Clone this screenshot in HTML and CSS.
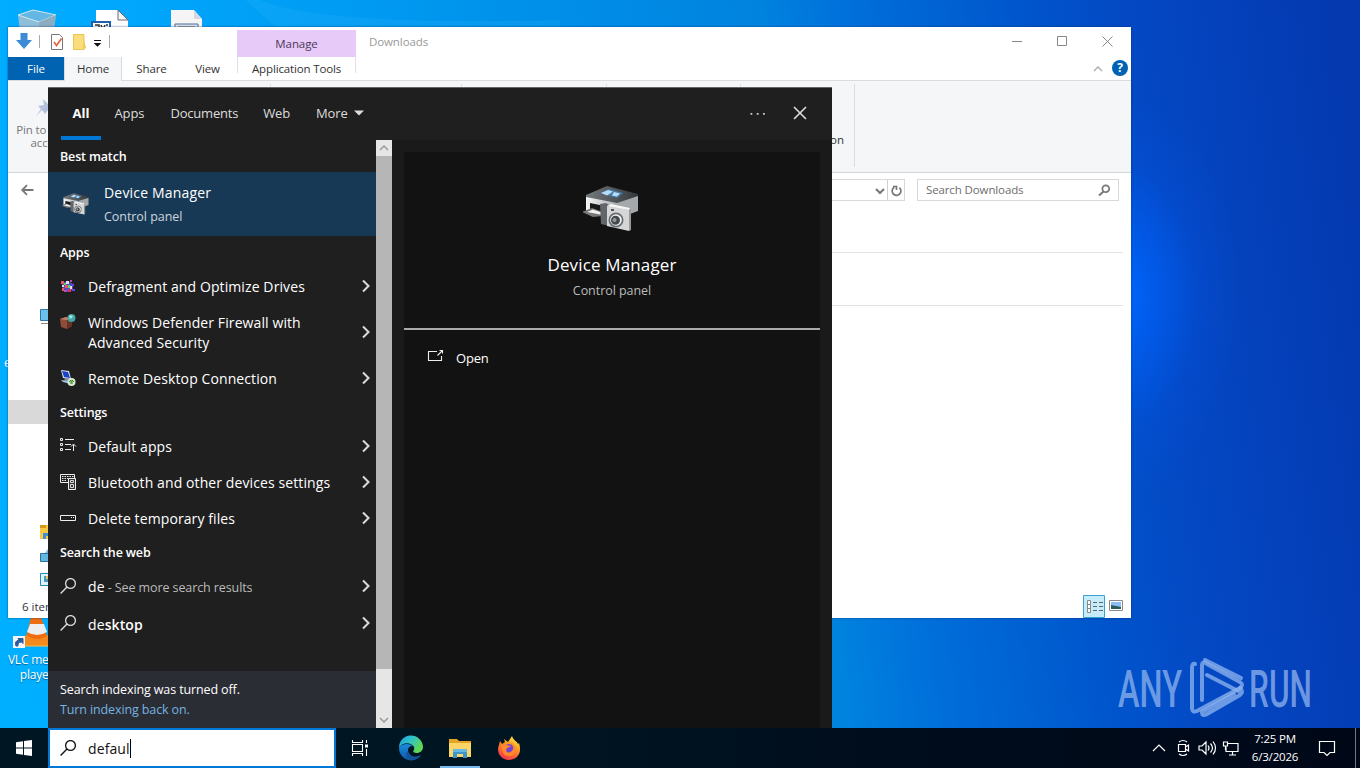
FILE: index.html
```html
<!DOCTYPE html>
<html lang="en">
<head>
<meta charset="utf-8">
<title>Desktop</title>
<link rel="stylesheet" href="styles.css">
</head>
<body>
<svg width="0" height="0" class="defs">
  <defs>
    <linearGradient id="side" x1="0" x2="1"><stop offset="0" stop-color="#f5f6f7"/><stop offset="1" stop-color="#a9adb1"/></linearGradient>
    <linearGradient id="topface" x1="0" x2="1"><stop offset="0" stop-color="#74797c"/><stop offset="1" stop-color="#34383b"/></linearGradient>
    <linearGradient id="edgeA" x1="0" y1="0" x2="1" y2=".5"><stop offset="0" stop-color="#1b9de2"/><stop offset=".5" stop-color="#2fc3c9"/><stop offset="1" stop-color="#62d84f"/></linearGradient>
    <linearGradient id="edgeB" x1="0" y1="0" x2="0" y2="1"><stop offset="0" stop-color="#1b8be0"/><stop offset="1" stop-color="#0c59a4"/></linearGradient>
    <linearGradient id="fox" x1=".8" y1="0" x2=".3" y2="1"><stop offset="0" stop-color="#fff04a"/><stop offset=".4" stop-color="#ff9a1f"/><stop offset="1" stop-color="#f4304f"/></linearGradient>
    <symbol id="device" viewBox="0 0 56 46">
      <path d="M3 9 24 0 55 8V11L34 19 3 13Z" fill="url(#topface)"/>
      <path d="M17 7 26 3 40 7 34 12Z" fill="#477cae"/><path d="M18 7 25 4 30 5.500 24 9.500ZM31 6l6 1.500-3 3-5-1Z" fill="#b9dcf6"/>
      <path d="M3 11 34 17V34L20 30 3 25Z" fill="url(#side)"/>
      <path d="M34 17 55 10V25L47 28 34 32Z" fill="#a4a8ab"/>
      <path d="M7 17 19 19.500V27L7 23Z" fill="#17191b"/>
      <path d="M-1 26 9 22 20 26V30L10 31Z" fill="#777"/><path d="M4 26 10 23.500 20 27V29Z" fill="#f2f2f2"/>
      <path d="M17 18 23 17 26 19V40L18 38Z" fill="#62666a"/>
      <path d="M24 20 46 24V45L24 40Z" fill="#d4d6d7"/><path d="M24 20 28 18 47 22 46 24Z" fill="#f6f6f6"/><path d="M46 24 48 23V44L46 45Z" fill="#999"/>
      <circle cx="33" cy="34" r="7.500" fill="#686c6f"/><circle cx="33" cy="34" r="5.800" fill="#f3f3f3"/><circle cx="32.500" cy="34.300" r="4.500" fill="#44494c"/><circle cx="31.500" cy="34" r="2" fill="#969a9c"/>
      <path d="M28 23h3v2h-3z" fill="#555"/>
    </symbol>
    <symbol id="chev" viewBox="0 0 8 14"><path d="M1 1.500 6.500 7 1 12.500" fill="none" stroke="#d8d8d8" stroke-width="2.100"/></symbol>
    <symbol id="lens" viewBox="0 0 16 16"><circle cx="10.500" cy="5.500" r="4.900" fill="none" stroke="currentColor" stroke-width="1.300"/><path d="M7 9 .6 15.400" stroke="currentColor" stroke-width="1.400"/></symbol>
  </defs>
</svg>
<div class="desktop">
  <svg class="wallpaper-beam" viewBox="0 0 400 27" width="400" height="27"><path d="M85 0 115 27H400V20C300 23 150 22 100 0Z" fill="#22aefb" opacity=".25"/></svg>
  <svg class="bin" width="42" height="30" viewBox="0 0 42 30"><path d="M2 5 17 0 40 5 36 30H5Z" fill="#9fc1d4" opacity=".9"/><path d="M2 5 17 0 40 5 23 12Z" fill="#63b7e2" stroke="#d3e5ee"/><path d="M23 12 40 5 36 30H23Z" fill="#8cacc0"/></svg>
  <svg class="doc-a" width="40" height="20" viewBox="0 0 40 20"><path d="M6 0h22l10 10v10H6z" fill="#fff"/><path d="M28 0v10h10z" fill="#f4f4f4" stroke="#667"/><path d="M1 11h20v9H1z" fill="#1f5fb0"/><path d="M3 13h16v7H3z" fill="#fff"/><path d="M5 15h4v5M11 15l2 5 2-5M16 15h2" stroke="#333" stroke-width="1.500" fill="none"/></svg>
  <svg class="doc-b" width="33" height="20" viewBox="0 0 33 20"><path d="M1 0h23l8 9v11H1z" fill="#f5f5f5"/><path d="M24 0v9h8z" fill="#d5d9de"/><path d="M5 14h23v6H5z" fill="#dfe5ec" stroke="#4b6fa3"/><path d="M8 16.500h17" stroke="#999"/></svg>
  <span class="edge-caption">e</span>
  <div class="vlc">
    <svg width="48" height="34" viewBox="0 0 48 34"><path d="M24 30 31 2h10l9 28Z" fill="#f06c10"/><path d="m27 17 3-8h14l3 8q-10 6-20 0Z" fill="#eee"/><path d="M20 30 26 20q11 8 22 0v11H20Z" fill="#f58a1c"/><path d="M20 31h28" stroke="#ffbd42"/><rect x="13" y="21" width="12" height="12" fill="#f4f4f4"/><path d="M16 31q-2-5 3-6l-1-1.500h5v5l-1.500-1.500q-4 0-3.500 4Z" fill="#2b5c9e" stroke="#2b5c9e"/></svg>
    <span>VLC media<br>player</span>
  </div>

  <section class="explorer">
    <header class="titlebar">
      <svg class="quick" width="106" height="30" viewBox="0 0 106 30">
        <path d="M12.500 6h7v7h4.500l-8 9-8-9h4.500z" fill="#3c8bd6"/><path d="M31.500 8v13M101.500 8v13" stroke="#aaa"/>
        <path d="M43.500 7.500h8l3 3v12h-11z" fill="#fff" stroke="#777"/><path d="m46 15 2.500 3.500 5-7" fill="none" stroke="#e0683c" stroke-width="1.700"/>
        <path d="M65 7h11v15H65z" fill="#f9dc7c"/><path d="m76 13 2 8-2 1" fill="#f1c84f"/><path d="M65.500 7.500h10.500v15H65.500z" fill="none" stroke="#e9c64f"/>
        <path d="M86 13.500h7M87 16.500h5l-2.500 2.500z" stroke="#111" stroke-width="1.100" fill="#111"/>
      </svg>
      <div class="manage">Manage</div><div class="wtitle">Downloads</div>
      <svg class="winbtns" width="120" height="30" viewBox="0 0 120 30"><path d="M5 14.500h10M50.500 9.500h9v9h-9zM95.500 9.500l10 10M105.500 9.500l-10 10" fill="none" stroke="#888"/></svg>
    </header>
    <nav class="tabs">
      <span class="file">File</span><span class="home">Home</span><span class="share">Share</span><span class="view">View</span><span class="apptools">Application Tools</span>
      <span class="help"><svg width="10" height="6" viewBox="0 0 10 6"><path d="m1 5 4-4 4 4" fill="none" stroke="#aaa" stroke-width="1.300"/></svg><b>?</b></span>
    </nav>
    <div class="ribbon">
      <div class="group g1"><div class="pin"><svg width="22" height="22" viewBox="0 0 22 22"><path d="m8 3 10 10-5 1-3 4-3-4-6 6 5-7-3-3 6-1Z" fill="#b4c1dc"/></svg><span>Pin to Quick<br>access</span></div></div>
      <div class="group g2"></div><div class="group g3"></div><div class="group g4"></div>
      <div class="group g5">Invert selection</div>
    </div>
    <div class="address">
      <svg class="back" width="14" height="12" viewBox="0 0 14 12"><path d="M12.500 6H2M6 1.200 1.200 6 6 10.800" fill="none" stroke="#777" stroke-width="1.800"/></svg>
      <div class="path"><svg width="36" height="20" viewBox="0 0 36 20"><path d="m7 9 4 4 4-4" fill="none" stroke="#777" stroke-width="2"/><path d="M18.500 0v20" stroke="#d0d0d0"/><path d="M25.200 7.200a4.400 4.400 0 1 0 5.200.4M24 6.500h3.500V10" fill="none" stroke="#777" stroke-width="1.700"/></svg></div>
      <div class="find"><span>Search Downloads</span><svg width="12" height="12" viewBox="0 0 12 12"><circle cx="7.800" cy="4.800" r="3.400" fill="none" stroke="#777" stroke-width="1.700"/><path d="M5.500 7.500 1 11.500" stroke="#777" stroke-width="2"/></svg></div>
    </div>
    <div class="body">
      <div class="tree">
        <svg class="t1" width="16" height="16" viewBox="0 0 16 16"><path d="M.5.500h15v11H.5z" fill="#6cc2ee" stroke="#3378a5"/><path d="M1 14.500h14" stroke="#888"/></svg>
        <div class="selected"></div>
        <svg class="t2" width="16" height="14" viewBox="0 0 16 14"><path d="M0 0h16v14H0z" fill="#f6ca45"/><path d="M0 0h6v3H0z" fill="#d79a18"/><path d="M3 8h10v6H9v-3H6v3H3z" fill="#3f91d4"/></svg>
        <svg class="t3" width="16" height="14" viewBox="0 0 16 14"><path d="M.5 4.500h15v8H.5z" fill="#62b7e3" stroke="#29739e"/><path d="M5 4 8 0v4" fill="#79bce0"/></svg>
        <svg class="t4" width="16" height="14" viewBox="0 0 16 14"><path d="M.5.500h15v12H.5z" fill="#dff3fc" stroke="#2689bd"/><path d="M4 3h5v6H4z" fill="#4d99c4"/><path d="M6 3h3v3H6z" fill="#e6c552"/></svg>
      </div>
      <div class="files"><div class="line l1"></div><div class="line l2"></div></div>
    </div>
    <footer class="status"><span>6 items</span>
      <svg width="44" height="23" viewBox="0 0 44 23"><path d="M.5.500h21v22H.5z" fill="#c6ebf9" stroke="#3ba1d2"/><path d="M4.500 5.500h3v12h-3zM4.500 9.500h3M4.500 13.500h3" fill="#fff" stroke="#888"/><path d="M10 7.500h4M16 7.500h4M10 11.500h4M16 11.500h4M10 15.500h4M16 15.500h4" stroke="#59666d"/><path d="M26.500 5.500h13v10h-13z" fill="#fff" stroke="#888"/><path d="M28 7h10v7H28z" fill="#8cbcf4"/><path d="m28 10 10 2v2H28z" fill="#2a5a5a"/></svg>
    </footer>
  </section>

  <section class="flyout">
    <header class="scopes">
      <b class="all">All</b><span>Apps</span><span class="documents">Documents</span><span class="webtab">Web</span><span class="more">More <svg width="10" height="6" viewBox="0 0 10 6"><path d="M0 .5h10L5 5.500Z" fill="#ddd"/></svg></span>
      <svg class="dots" width="16" height="4" viewBox="0 0 16 4"><path d="M.5 1h1.800v1.800H.5zM6.800 1h1.800v1.800H6.800zM13 1h1.800v1.800H13z" fill="#ccc"/></svg>
      <svg class="close" width="14" height="14" viewBox="0 0 14 14"><path d="m1 1 12 12M13 1 1 13" stroke="#ddd" stroke-width="1.600"/></svg>
    </header>
    <div class="columns">
      <div class="results">
        <h2>Best match</h2>
        <div class="best"><svg width="27" height="24"><use href="#device"/></svg><div><div class="name">Device Manager</div><div class="sub">Control panel</div></div></div>
        <h2>Apps</h2>
        <div class="row"><svg class="ico" width="16" height="16" viewBox="0 0 16 16"><path d="m2 5 6-2 5 3v6l-5 2-5-2Z" fill="#5450b5"/><path d="M1 3h3v3H1zM5 7h3v3H5zM2 10h2v3H2z" fill="#ef5362"/><path d="M6 3h3v3H6zM10 8h2v3h-2zM2 7h2v2H2z" fill="#e7ddf1"/><path d="M10 2h2v2h-2zM4 12h3v2H4z" fill="#b94ac2"/><path d="M4 5h2v2H4zM8 7h2v3H8z" fill="#55d175"/><path d="M8 11h3v3H8z" fill="#d93655"/><path d="M12 6h2v2h-2zM12 11h3v2h-3z" fill="#6345f0"/></svg><span class="w1">Defragment and Optimize Drives</span><svg class="go" width="8" height="14"><use href="#chev"/></svg></div>
        <div class="row tall"><svg class="ico" width="16" height="16" viewBox="0 0 16 16"><path d="m0 5 6-2 6 2v7l-5 3-6-2Z" fill="#8f4c38"/><path d="m0 5 6 1 6-1-6-2Z" fill="#c08068"/><path d="M7 6v9l5-3V5Z" fill="#643326"/><circle cx="11.500" cy="4" r="4" fill="#40a7a5"/><path d="M9 2q3-2 4 1l-3 2Z" fill="#a7e5e5"/></svg><span class="w2">Windows Defender Firewall with<br>Advanced Security</span><svg class="go" width="8" height="14"><use href="#chev"/></svg></div>
        <div class="row"><svg class="ico" width="16" height="16" viewBox="0 0 16 16"><path d="m1 0 8 1 2 8-8-1Z" fill="#d9e1eb"/><path d="m2 1 6 1 2 6-6-1Z" fill="#1842c7"/><path d="m1 10 8 1 2 3-8-2Z" fill="#9fc4ed"/><path d="M5 8h3v3H4Z" fill="#8792a0"/><circle cx="11.500" cy="12" r="4" fill="#d9eacb"/><path d="m9 12 2-2v4m3-2-2-2v4" stroke="#378a3a" fill="none"/></svg><span class="w3">Remote Desktop Connection</span><svg class="go" width="8" height="14"><use href="#chev"/></svg></div>
        <h2>Settings</h2>
        <div class="row"><svg class="ico" width="16" height="16" viewBox="0 0 16 16"><path d="M.5.500h2v2h-2zM.5 5.500h2v2h-2zM.5 10.500h2v2h-2zM5 1.500h9M5 6.500h6M5 11.500h6M13.500 13V7M11 8.500 13.500 6 16 8.500" fill="none" stroke="#eee"/></svg><span class="w4">Default apps</span><svg class="go" width="8" height="14"><use href="#chev"/></svg></div>
        <div class="row"><svg class="ico" width="16" height="16" viewBox="0 0 16 16"><path d="M8 8.500H.5v-8h14V4" fill="none" stroke="#eee"/><path d="M2 2.500h12M2 4.500h6M2 6.500h5" stroke="#eee" stroke-dasharray="1.500 1"/><path d="M8.500 4.500h7v11h-7z" fill="#333" stroke="#eee"/><path d="M10.500 6.500h3v2h-3zM10.500 10.500h3v3h-3z" fill="none" stroke="#ddd"/></svg><span class="w5">Bluetooth and other devices settings</span><svg class="go" width="8" height="14"><use href="#chev"/></svg></div>
        <div class="row"><svg class="ico" width="16" height="16" viewBox="0 0 16 16"><path d="M.5 5.500h15v5H.5zM11 7.500h1M13 7.500h1" fill="none" stroke="#eee"/></svg><span class="w6">Delete temporary files</span><svg class="go" width="8" height="14"><use href="#chev"/></svg></div>
        <h2>Search the web</h2>
        <div class="row web"><svg class="ico" width="16" height="16"><use href="#lens"/></svg><span>de<small> - See more search results</small></span><svg class="go" width="8" height="14"><use href="#chev"/></svg></div>
        <div class="row web"><svg class="ico" width="16" height="16"><use href="#lens"/></svg><span>de<b>sktop</b></span><svg class="go" width="8" height="14"><use href="#chev"/></svg></div>
        <div class="notice"><div>Search indexing was turned off.</div><div class="link">Turn indexing back on.</div></div>
      </div>
      <div class="scroll"><svg width="16" height="16" viewBox="0 0 16 16"><path d="m4 10 4-4 4 4" fill="none" stroke="#999" stroke-width="1.500"/></svg><div class="thumb"></div><svg width="16" height="16" viewBox="0 0 16 16"><path d="m4 6 4 4 4-4" fill="none" stroke="#999" stroke-width="1.500"/></svg></div>
      <div class="preview">
        <div class="hero"><svg width="56" height="46"><use href="#device"/></svg><div class="big">Device Manager</div><div class="sub">Control panel</div></div>
        <div class="open"><svg width="16" height="14" viewBox="0 0 16 14"><path d="M9 2.500H.5v9h13V7M9.500 6.500 14.500 1.500M11.500 1.500h3V4.500" fill="none" stroke="#eee" stroke-width="1.100"/></svg><span>Open</span></div>
      </div>
    </div>
  </section>

  <svg class="watermark" width="194" height="64" viewBox="0 0 194 64">
    <g class="wm-text"><text x="-1" y="51" textLength="64" lengthAdjust="spacingAndGlyphs">ANY</text><text x="130" y="51" textLength="63" lengthAdjust="spacingAndGlyphs">RUN</text></g>
    <g fill="none" stroke="#8fb5ef" stroke-opacity=".75" stroke-width="4" stroke-linejoin="round" stroke-linecap="round"><path d="M76 8Q73 7 73 12V52Q73 57 78 55L121 32Q125 29 121 26L88 8Q83 4 83 10V44"/><path d="M88 19 121 36M122 22 86 4M121 32Q125 36 121 39L88 58Q83 61 83 56L115 38"/></g>
  </svg>

  <footer class="taskbar">
    <div class="start"><svg width="16" height="16" viewBox="0 0 16 16"><path d="M0 2.200 7 1.200V7.500H0zM8 1 16 0V7.500H8zM0 8.500H7V14.800L0 13.800zM8 8.500H16V16L8 15z" fill="#fff"/></svg></div>
    <div class="searchbox"><svg width="16" height="16"><use href="#lens"/></svg><span>defaul</span><i></i></div>
    <div class="btn tv"><svg width="16" height="16" viewBox="0 0 16 16"><path d="M.5 0v2.500h10V0M.5 16v-2.500h10V16M.5 4.500h10v7H.5zM14.500 0v3M14.500 9v7" fill="none" stroke="#fff" stroke-width="1.100"/><path d="M13 4.500h3v3h-3z" fill="#fff"/></svg></div>
    <div class="btn"><svg width="24" height="24" viewBox="0 0 24 24"><path d="M0 12A12 12 0 0 1 24 11C24 16 19 18 15 16.500 13 15.500 16 14 15 11 13 7 4 5 0 12Z" fill="url(#edgeA)"/><path d="M0 12C2 7 11 7 14 10 8 9 7 17 13 20 16 21.500 19 21 22 19A12 12 0 0 1 0 12Z" fill="url(#edgeB)"/><path d="M8.500 15C9 21 17 22 22 19 19 24 13 24.500 10 23 6 21 7 16 8.500 15Z" fill="#174f98"/></svg></div>
    <div class="btn active"><svg width="22" height="20" viewBox="0 0 22 20"><path d="M0 1h8l2 2h12v16H0z" fill="#e5a427"/><path d="M0 5h22v14H0z" fill="#fbd667"/><path d="M4 11h14v9h-4v-4H8v4H4z" fill="#3c95cd"/><path d="M4 11h14v3H4z" fill="#66b9e7"/></svg></div>
    <div class="btn"><svg width="22" height="24" viewBox="0 0 22 24"><path d="M2 5 4 8 7 6 6 3 10 6 14 0C15 4 19 5 20 8L21 7C25 19 17 24 11 24 2 24-2 15 1 9Z" fill="url(#fox)"/><circle cx="11" cy="13.500" r="5.500" fill="#7443d5"/><path d="M3 9C6 7 9 10 13 10 11 12 9 11 8 14 9 18 14 17 15 13 16 10 13 8 12 6 20 9 18 20 11 20 5 20 4 15 3 9Z" fill="#ff892c"/></svg></div>
    <div class="tray">
      <svg width="92" height="20" viewBox="0 0 92 20"><g fill="none" stroke="#fff" stroke-width="1.200"><path d="m2 13 6-6 6 6"/><path d="M27.500 6.500h7v7h-7zM34.500 9l3-2v6l-3-2M28 4q4-3 8 0M28 16q4 3 8 0"/><path d="M48 8h3l4-4v12l-4-4h-3zM57 7.500q2 2.500 0 5M59.500 5.500q4 4.500 0 9M62 3.500q5 6.500 0 13"/><path d="M77 5.500h10v8H75V9M72.500 4v4h4V4zM78 17h7M81.500 14v3M74.500 8v4"/></g></svg>
      <div class="clock">7:25 PM<br>6/3/2026</div>
      <svg class="note" width="18" height="18" viewBox="0 0 18 18"><path d="M1.500 2.500h15v11H12l-3 3-3-3H1.500z" fill="none" stroke="#fff" stroke-width="1.200"/></svg>
    </div>
    <div class="peek"></div>
  </footer>
</div>
</body>
</html>
```
FILE: styles.css
```css
* { box-sizing: border-box; }
body { margin: 0; overflow: hidden; font-family: "Open Sans", "Noto Sans", sans-serif; }
svg { display: block; flex: none; overflow: visible; }
.defs { position: absolute; }
.desktop {
  position: relative; width: 1360px; height: 768px; overflow: hidden;
  background:
    radial-gradient(ellipse 120px 200px at 1120px 295px, rgba(0,104,255,.95) 0, rgba(0,100,255,.6) 30%, rgba(0,90,240,.2) 65%, rgba(0,85,230,0) 100%),
    linear-gradient(83deg, #00b0ff 0, #00abff 10%, #0098f0 34%, #0083df 58.5%, #006fda 65%, #0055cc 77%, #0448c4 84%, #0439b0 98%);
}
.wallpaper-beam { position: absolute; left: 160px; top: 0; }
.bin { position: absolute; left: 16px; top: 10px; }
.doc-a { position: absolute; left: 90px; top: 10px; }
.doc-b { position: absolute; left: 170px; top: 10px; }
.edge-caption { position: absolute; left: 4px; top: 355px; color: #fff; font-size: 12px; line-height: 16px; }
.vlc { position: absolute; left: 0; top: 615px; width: 73px; color: #fff; font-size: 12px; line-height: 15px; text-align: center; text-shadow: 0 1px 1px #0068a0; white-space: nowrap; letter-spacing: -.2px; }
.vlc svg { margin-bottom: 3px; }

/* File Explorer */
.explorer { position: absolute; left: 8px; top: 27px; width: 1123px; height: 591px; background: #fff; display: flex; flex-direction: column; font-size: 11.5px; color: #333; box-shadow: 0 0 2px rgba(0,40,100,.7); }
.titlebar { display: flex; height: 30px; flex: none; }
.manage { width: 119px; margin: 3px 0 0 123px; background: #e8caf9; text-align: center; line-height: 28px; color: #4b3857; letter-spacing: -.1px; }
.wtitle { margin-left: 13px; line-height: 30px; color: #999; letter-spacing: -.1px; }
.winbtns { margin: 0 4px 0 auto; }
.tabs { display: flex; height: 24px; flex: none; border-bottom: 1px solid #dadbdc; line-height: 24px; }
.tabs span { text-align: center; letter-spacing: -.1px; }
.tabs .file { width: 56px; background: #0063b1; color: #fff; }
.tabs .home { width: 58px; height: 24px; background: #f5f6f7; border: 1px solid #dadbdc; border-width: 0 1px; }
.tabs .share { width: 59px; }
.tabs .view { width: 53px; }
.tabs .apptools { width: 119px; margin-left: 3px; height: 16px; border: 1px solid #e4dce8; border-width: 0 1px; white-space: nowrap; letter-spacing: -.15px; }
.tabs .help { margin-left: auto; padding-right: 3px; display: flex; gap: 9px; align-items: center; }
.help b { width: 16px; height: 16px; margin-top: -2px; border-radius: 50%; background: #0062b5; color: #fff; line-height: 16px; font-size: 12px; }
.ribbon { display: flex; flex: none; height: 92px; background: #f4f6f8; border-bottom: 1px solid #d5d6d7; color: #777; line-height: 13px; }
.group { border-right: 1px solid #dcdfe1; margin: 3px 0 5px; }
.g1 { width: 263px; }
.g2 { width: 191px; }
.g3 { width: 145px; }
.g4 { width: 134px; }
.g5 { width: 114px; padding: 49px 10px 0 0; text-align: right; color: #333; }
.pin { width: 79px; display: flex; flex-direction: column; align-items: center; text-align: center; padding-top: 12px; white-space: nowrap; letter-spacing: -.15px; }
.pin svg { margin: 0 0 5px -4px; }
.address { display: flex; height: 34px; flex: none; align-items: center; padding: 0 12px; }
.back { margin-left: 1px; }
.path { margin-left: 60px; flex: 1; height: 22px; border: 1px solid #d9d9d9; display: flex; justify-content: flex-end; }
.path svg { margin-right: -1px; }
.find { margin-left: 12px; width: 202px; height: 22px; border: 1px solid #d9d9d9; display: flex; align-items: center; justify-content: space-between; padding: 0 8px; color: #6d6d6d; letter-spacing: -.12px; }
.find span { padding-bottom: 2px; }
.body { flex: 1; display: flex; }
.tree { width: 150px; display: flex; flex-direction: column; }
.tree svg { margin-left: 32px; }
.t1 { margin-top: 102px; }
.selected { height: 24px; background: #d9d9d9; margin: 75px 0 101px; }
.t3, .t4 { margin-top: 10px; }
.files { flex: 1; margin-right: 8px; }
.line { border-bottom: 1px solid #e2e2e2; }
.l1 { height: 46px; }
.l2 { height: 53px; }
.status { height: 23px; flex: none; display: flex; justify-content: space-between; padding: 0 4px 0 14px; line-height: 23px; color: #334; }

/* Search flyout */
.flyout { position: absolute; left: 48px; top: 87px; width: 784px; height: 641px; border-top: 1px solid #666; background: #1f1f1f; color: #fff; display: flex; flex-direction: column; font-size: 14px; }
.scopes { height: 52px; flex: none; display: flex; padding-left: 13px; font-size: 13px; line-height: 51px; color: #ddd; }
.scopes span { margin-left: 26px; letter-spacing: -.1px; }
.all { width: 40px; text-align: center; border-bottom: 4px solid #0078d7; color: #fff; }
.scopes .all + span { margin-left: 13.500px; }
.scopes .documents { letter-spacing: -.2px; }
.scopes .webtab { margin-left: 25px; letter-spacing: -.2px; }
.scopes .more { display: flex; align-items: center; gap: 6px; height: 50px; }
.dots { margin: 24px 27px 0 auto; }
.close { margin: 18px 25px 0 0; }
.columns { flex: 1; display: flex; }
.results { width: 328px; display: flex; flex-direction: column; }
.results h2 { margin: 0; height: 32px; flex: none; padding: 1px 0 0 12px; line-height: 32px; font-size: 12.5px; font-weight: 600; letter-spacing: -.15px; }
.best { height: 64px; flex: none; background: #173955; display: flex; align-items: center; gap: 15px; padding-left: 14px; }
.name { line-height: 22px; margin-bottom: 3px; letter-spacing: .18px; }
.sub { font-size: 12.5px; line-height: 20px; color: #ccd6de; letter-spacing: -.05px; }
.row { height: 36px; flex: none; display: flex; align-items: center; padding: 0 6px 0 12px; gap: 12px; line-height: 20px; white-space: nowrap; letter-spacing: .1px; }
.row > span { padding-top: 2px; }
.row.tall { height: 56px; }
.tall .ico { margin-bottom: 20px; }
.row.web { height: 37px; }
.web .ico, .web .go { margin-bottom: 1px; }
.web .ico { color: #ddd; }
.row b { font-weight: 600; }
.row small { font-size: 12.5px; color: #bbb; letter-spacing: -.1px; }
.go { margin-left: auto; }
.notice { margin-top: auto; height: 57px; background: #2b2d34; padding: 9px 12px; font-size: 12.5px; line-height: 20px; letter-spacing: -.12px; }
.link { color: #75b3e0; }
.scroll { width: 16px; background: #e6e6e6; display: flex; flex-direction: column; }
.thumb { height: 513px; margin-bottom: auto; background: #b6b6b6; }
.preview { flex: 1; margin: 0; border: 12px solid #1a1a1a; border-bottom: 0; background: #121212; }
.hero { height: 178px; border-bottom: 2px solid #aaa; display: flex; flex-direction: column; align-items: center; padding-top: 34px; }
.hero svg { margin-left: -2px; }
.big { font-size: 17px; line-height: 26px; margin: 20px 0 3px; letter-spacing: .15px; }
.hero .sub { color: #bbb; }
.open { display: flex; align-items: center; gap: 12px; padding: 18px 24px; font-size: 13px; line-height: 20px; letter-spacing: -.2px; }
.open svg { margin-top: -5px; }

.watermark { position: absolute; left: 1119px; top: 656px; }
.wm-text { font-family: Roboto, sans-serif; font-size: 51px; font-weight: 500; fill: #8fb3ee; fill-opacity: .75; }

/* Taskbar */
.taskbar { position: absolute; left: 0; bottom: 0; width: 1360px; height: 40px; display: flex; background: linear-gradient(90deg, #001723, #001522 40%, #000d1c 65%, #000818); }
.start, .btn { width: 48px; display: flex; align-items: center; justify-content: center; }
.btn { margin-right: 1px; }
.tv { margin-right: 3px; }
.active { background: linear-gradient(#76b9ed, #76b9ed) 4px 38px / 40px 2px no-repeat; }
.searchbox { width: 288px; border: 2px solid #0078d7; background: #fff; display: flex; align-items: center; padding-left: 10px; color: #111; font-size: 14px; }
.searchbox span { margin-left: 12px; letter-spacing: .1px; }
.searchbox i { width: 1px; height: 19px; background: #000; }
.tray { margin-left: auto; display: flex; align-items: center; }
.clock { width: 64px; margin-left: 0; text-align: center; color: #fff; font-size: 11.5px; line-height: 18px; letter-spacing: -.2px; }
.note { margin: 0 19px 0 11px; }
.peek { width: 5px; border-left: 1px solid #778; }
```
